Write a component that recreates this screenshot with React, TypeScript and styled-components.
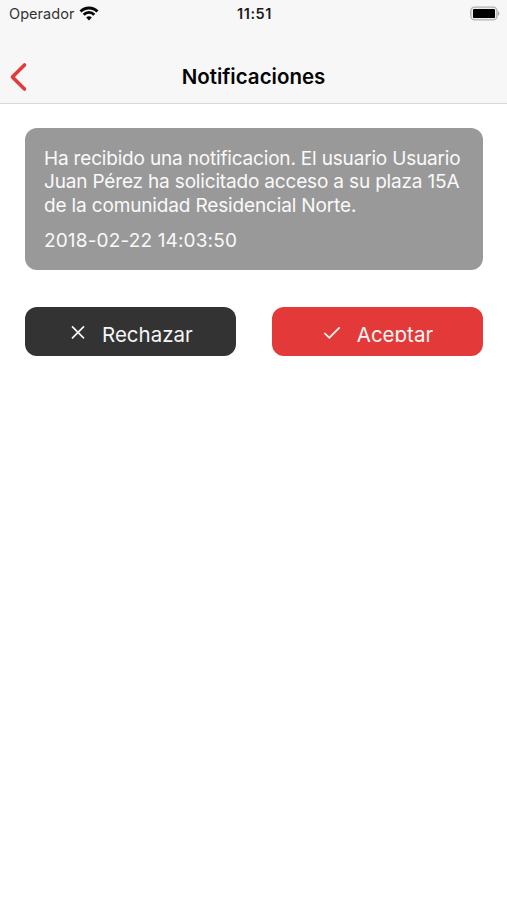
import React from "react";
import styled, { createGlobalStyle } from "styled-components";

const GlobalStyle = createGlobalStyle`
  * { box-sizing: border-box; }
  body { margin: 0; background: #fff; }
`;

const Screen = styled.div`
  width: 100%;
  height: 900px;
  background: #fff;
  font-family: Inter, "Liberation Sans", sans-serif;
  overflow: hidden;
`;

const Header = styled.header`
  height: 104px;
  background: #f7f7f7;
  border-bottom: 1px solid #d8d8d8;
`;

const StatusBar = styled.div`
  display: grid;
  grid-template-columns: 1fr auto 1fr;
  align-items: center;
  height: 27px;
  padding: 0 7px 0 9px;
`;

const Carrier = styled.div`
  display: flex;
  align-items: center;
  gap: 5px;
  font-size: 14.5px;
  line-height: 20px;
  letter-spacing: 0.05px;
  color: #333;
`;

const Clock = styled.time`
  font-size: 14.5px;
  line-height: 20px;
  font-weight: 600;
  letter-spacing: 0.6px;
  color: #1c1c1c;
`;

const BatteryIcon = styled.svg`
  justify-self: end;
`;

const NavBar = styled.nav`
  display: grid;
  grid-template-columns: 1fr auto 1fr;
  align-items: center;
  height: 76px;
  padding: 22px 9px 0;
`;

const BackButton = styled.button`
  justify-self: start;
  display: flex;
  padding: 2px 0 0;
  border: 0;
  background: none;
`;

const Title = styled.h1`
  margin: 0;
  padding-top: 2px;
  font-size: 20.5px;
  line-height: 24px;
  font-weight: 600;
  color: #050505;
`;

const Content = styled.main`
  padding: 24px 24.5px 0 25px;
`;

const Card = styled.section`
  height: 142px;
  padding: 19px 18px 0 19px;
  border-radius: 12px;
  background: #999;
  color: #fafafa;
  font-size: 19px;
  line-height: 23.4px;
  white-space: nowrap;
`;

const Line = styled.span<{ $spacing: number }>`
  display: block;
  letter-spacing: ${(p) => p.$spacing}px;
`;

const DateText = styled.time`
  display: block;
  margin-top: 12px;
  letter-spacing: 0.15px;
`;

const Actions = styled.div`
  display: grid;
  grid-template-columns: 1fr 1fr;
  gap: 36px;
  margin-top: 37px;
`;

const ActionButton = styled.button<{ $color: string; $indent: number; $gap: number }>`
  display: flex;
  align-items: flex-start;
  gap: ${(p) => p.$gap}px;
  height: 49px;
  padding: 14px 0 0 ${(p) => p.$indent}px;
  border: 0;
  border-radius: 12px;
  background: ${(p) => p.$color};
  color: #f5f5f5;
  font-family: inherit;
`;

const ButtonLabel = styled.span`
  height: 21px;
  overflow: hidden;
  font-size: 20.5px;
  line-height: 28px;
  letter-spacing: 0;
`;

const ButtonIcon = styled.svg`
  margin-top: 2px;
`;

export default function App() {
  return (
    <Screen>
      <GlobalStyle />
      <Header>
        <StatusBar>
          <Carrier>
            Operador
            <svg width="20" height="16" viewBox="0 0 20 16" fill="none" stroke="#080808" strokeWidth="2.8">
              <path d="M1.5 5.6C6.2 0.8 13.8 0.8 18.5 5.6" />
              <path d="M4.7 8.7C7.6 5.7 12.4 5.7 15.3 8.7" />
              <path d="M10 14.4 7.2 11.5C8.8 9.9 11.2 9.9 12.8 11.5Z" fill="#080808" stroke="none" />
            </svg>
          </Carrier>
          <Clock>11:51</Clock>
          <BatteryIcon width="30" height="16" viewBox="0 0 30 16">
            <rect x="0.8" y="1.1" width="26.2" height="12.8" rx="4" fill="#eee" stroke="#b2b2b2" strokeWidth="1.4" />
            <rect x="3" y="2.9" width="22" height="9.2" rx="1.2" fill="#000" />
            <path d="M28 5Q30.8 7.5 28 10Z" fill="#aaa" />
          </BatteryIcon>
        </StatusBar>
        <NavBar>
          <BackButton aria-label="Volver">
            <svg width="20" height="30" viewBox="0 0 20 30" fill="none" stroke="#e23a39" strokeWidth="3.6" strokeLinecap="round" strokeLinejoin="round">
              <path d="M15.5 3 3.4 15 15.5 27" />
            </svg>
          </BackButton>
          <Title>Notificaciones</Title>
        </NavBar>
      </Header>
      <Content>
        <Card>
          <Line $spacing={-0.18}>Ha recibido una notificacion. El usuario Usuario</Line>
          <Line $spacing={-0.17}>Juan Pérez ha solicitado acceso a su plaza 15A</Line>
          <Line $spacing={-0.15}>de la comunidad Residencial Norte.</Line>
          <DateText>2018-02-22 14:03:50</DateText>
        </Card>
        <Actions>
          <ActionButton $color="#333" $indent={45} $gap={16}>
            <ButtonIcon width="16" height="18" viewBox="0 0 16 18" fill="none" stroke="#f5f5f5" strokeWidth="1.7">
              <path d="M2 3.3 14 15.3M14 3.3 2 15.3" />
            </ButtonIcon>
            <ButtonLabel>Rechazar</ButtonLabel>
          </ActionButton>
          <ActionButton $color="#e33a39" $indent={51} $gap={16}>
            <ButtonIcon width="18" height="18" viewBox="0 0 18 18" fill="none" stroke="#f5f5f5" strokeWidth="1.7">
              <path d="M1.3 10 6.3 14.7 16.7 4.3" />
            </ButtonIcon>
            <ButtonLabel>Aceptar</ButtonLabel>
          </ActionButton>
        </Actions>
      </Content>
    </Screen>
  );
}
